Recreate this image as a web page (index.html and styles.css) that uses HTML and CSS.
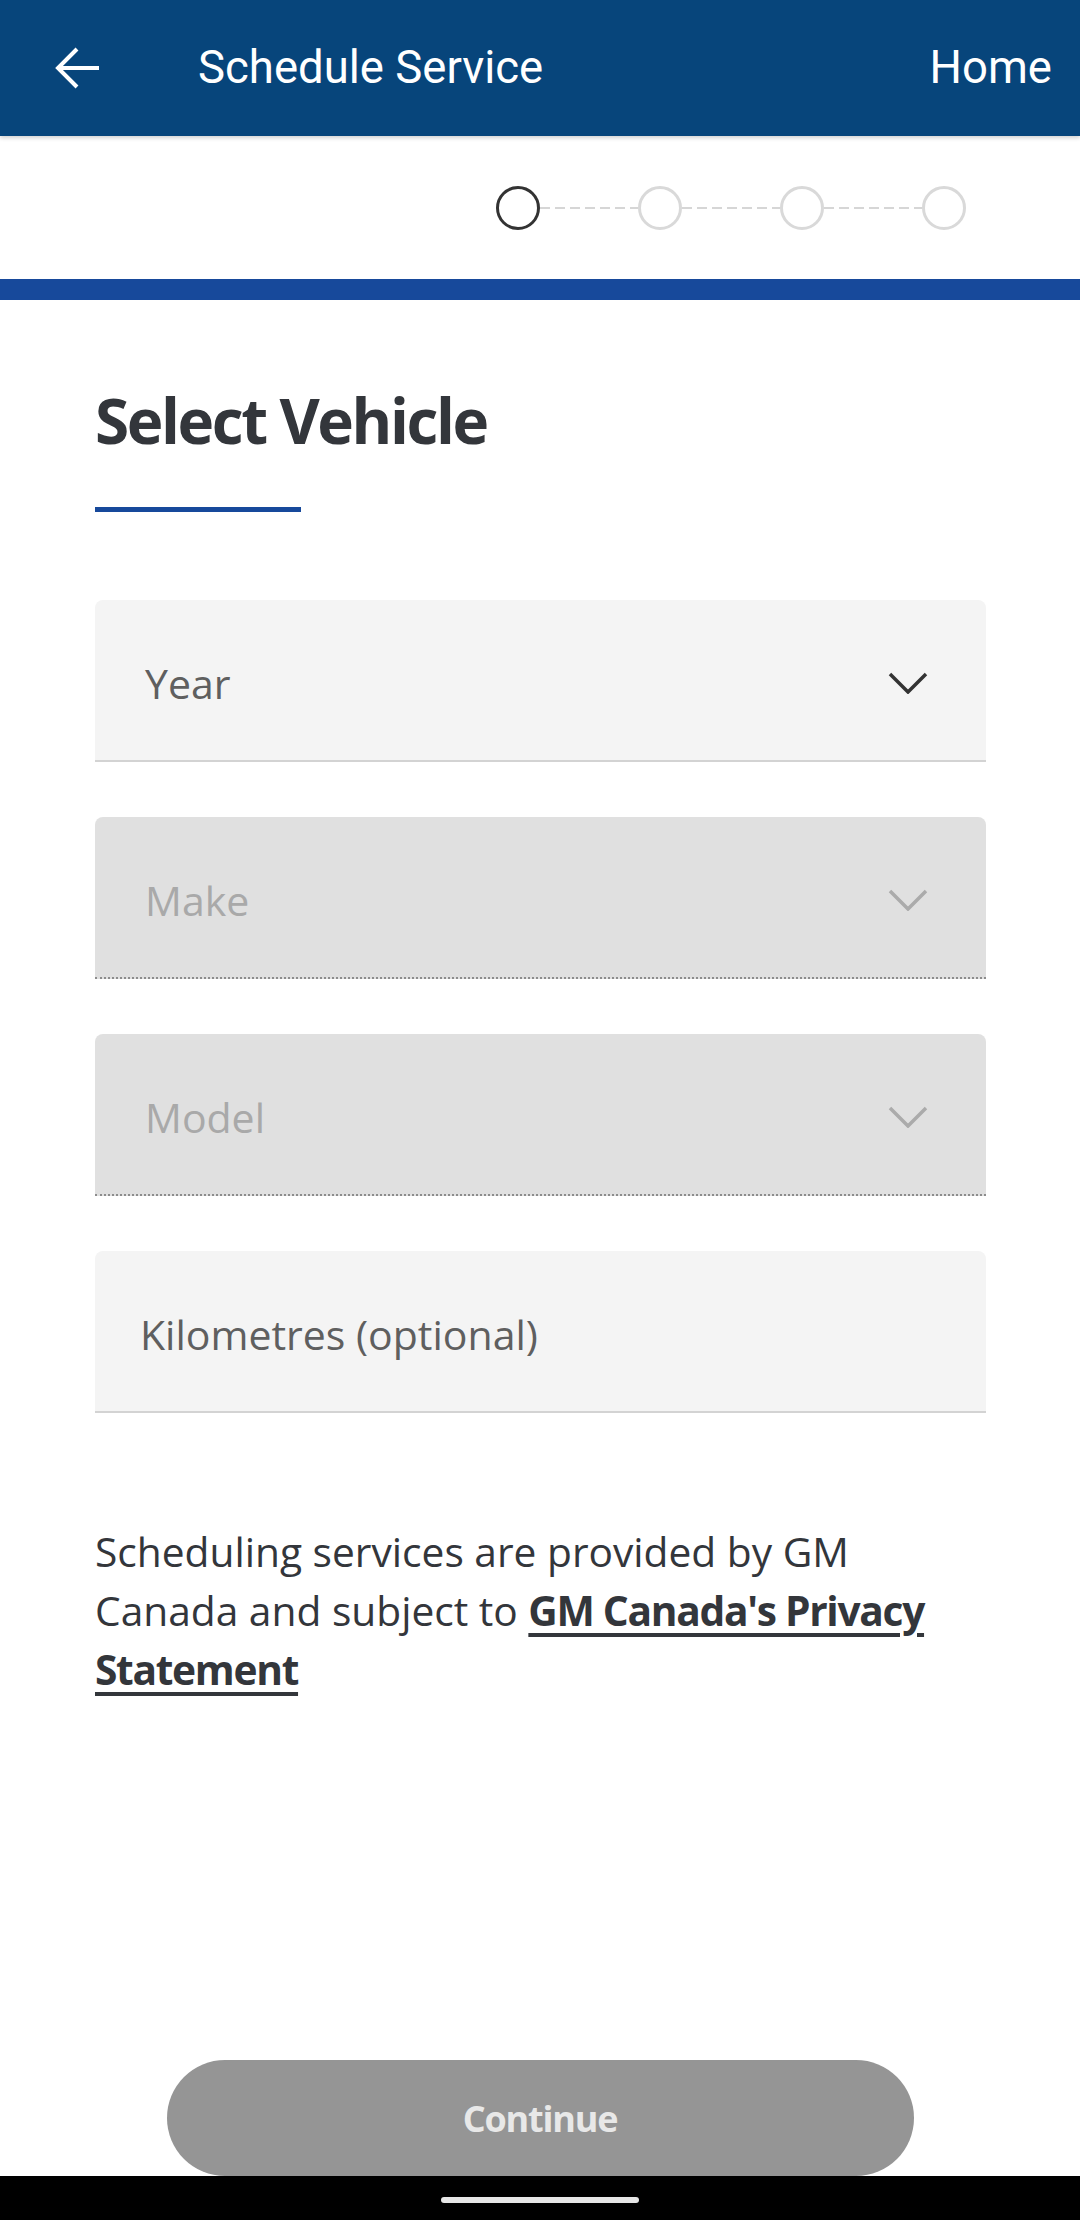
FILE: index.html
```html
<!DOCTYPE html>
<html lang="en">
<head>
<meta charset="utf-8">
<title>Schedule Service</title>
<link rel="stylesheet" href="styles.css">
</head>
<body>
<div class="screen">
  <header class="appbar">
    <svg class="appbar-back" width="44" height="42" viewBox="0 0 44 42" aria-hidden="true">
      <path d="M44 21H4M22 2L3 21L22 40" fill="none" stroke="#ffffff" stroke-width="4"/>
    </svg>
    <h1 class="appbar-title">Schedule Service</h1>
    <span class="appbar-action">Home</span>
  </header>

  <div class="stepper">
    <span class="step step-active"></span>
    <span class="step-line"></span>
    <span class="step"></span>
    <span class="step-line"></span>
    <span class="step"></span>
    <span class="step-line"></span>
    <span class="step"></span>
  </div>
  <div class="progress-band"></div>

  <main class="content">
    <h2 class="page-title">Select Vehicle</h2>
    <div class="title-rule"></div>

    <div class="fields">
      <div class="field">
        <span class="field-label">Year</span>
        <svg class="chevron" width="40" height="22" viewBox="0 0 40 22" aria-hidden="true">
          <path d="M2 2L20 20L38 2" fill="none" stroke="#333333" stroke-width="3.5"/>
        </svg>
      </div>
      <div class="field field-disabled">
        <span class="field-label">Make</span>
        <svg class="chevron" width="40" height="22" viewBox="0 0 40 22" aria-hidden="true">
          <path d="M2 2L20 20L38 2" fill="none" stroke="#ababab" stroke-width="3.5"/>
        </svg>
      </div>
      <div class="field field-disabled">
        <span class="field-label">Model</span>
        <svg class="chevron" width="40" height="22" viewBox="0 0 40 22" aria-hidden="true">
          <path d="M2 2L20 20L38 2" fill="none" stroke="#ababab" stroke-width="3.5"/>
        </svg>
      </div>
      <div class="field field-input">
        <span class="field-label">Kilometres (optional)</span>
      </div>
    </div>

    <p class="disclaimer">Scheduling services are provided by GM Canada and subject to <a class="disclaimer-link" href="#">GM Canada's Privacy Statement</a></p>
  </main>

  <footer class="actions">
    <button class="btn-continue" type="button">Continue</button>
  </footer>

  <div class="navbar"><span class="nav-pill"></span></div>
</div>
</body>
</html>
```

FILE: styles.css
```css
* {
  box-sizing: border-box;
}

html, body {
  margin: 0;
  padding: 0;
  background: #ffffff;
}

.screen {
  width: 1080px;
  height: 2220px;
  overflow: hidden;
  display: flex;
  flex-direction: column;
  font-family: "Open Sans", "Noto Sans", sans-serif;
  background: #ffffff;
}

/* App bar */
.appbar {
  position: relative;
  z-index: 1;
  height: 136px;
  flex: 0 0 136px;
  background: #07457b;
  display: flex;
  align-items: center;
  padding: 0 28px 0 55px;
  box-shadow: 0 2px 4px rgba(0, 0, 0, 0.18);
  color: #ffffff;
  font-family: Roboto, "Liberation Sans", sans-serif;
}

.appbar-back {
  display: block;
  flex: 0 0 auto;
}

.appbar-title {
  margin: 0 0 0 99px;
  font-size: 45.5px;
  font-weight: 400;
  line-height: 1;
}

.appbar-action {
  margin-left: auto;
  font-size: 45.5px;
  line-height: 1;
}

/* Stepper */
.stepper {
  height: 143px;
  flex: 0 0 143px;
  display: flex;
  align-items: center;
  padding-left: 496px;
}

.step {
  width: 44px;
  height: 44px;
  border-radius: 50%;
  border: 3px solid #d9d9d9;
  flex: 0 0 auto;
}

.step-active {
  border-color: #333333;
}

.step-line {
  width: 98px;
  height: 2px;
  background: repeating-linear-gradient(to right, #d6d6d6 0 10px, transparent 10px 15px);
}

.progress-band {
  height: 21px;
  flex: 0 0 21px;
  background: #17499b;
}

/* Content */
.content {
  flex: 1 1 auto;
  padding: 0 94px 0 95px;
  color: #33363b;
}

.page-title {
  margin: 83px 0 0;
  font-size: 62px;
  line-height: 74px;
  font-weight: 700;
  letter-spacing: -2.4px;
  color: #33363b;
}

.title-rule {
  width: 206px;
  height: 5px;
  margin-top: 50px;
  background: #17499b;
}

.fields {
  margin-top: 88px;
  display: flex;
  flex-direction: column;
  gap: 55px;
}

.field {
  height: 162px;
  display: flex;
  align-items: center;
  justify-content: space-between;
  padding: 6px 58px 0 50px;
  background: #f4f4f4;
  border-bottom: 2px solid #d3d3d3;
  border-radius: 8px 8px 0 0;
}

.field-label {
  font-size: 41px;
  line-height: 49px;
  color: #5f5f5f;
}

.chevron {
  display: block;
  flex: 0 0 auto;
}

.field-disabled {
  background: #e0e0e0;
  border-bottom: 2px dotted #8c8c8c;
}

.field-disabled .field-label {
  color: #a9a9a9;
}

.field-input {
  padding-left: 45px;
}

.disclaimer {
  margin: 109px 0 0;
  font-size: 40.7px;
  line-height: 59px;
  color: #33363b;
}

.disclaimer-link {
  color: #33363b;
  font-weight: 700;
  letter-spacing: -1.3px;
  text-decoration: underline;
  text-decoration-thickness: 4px;
  text-underline-offset: 7px;
}

/* Footer */
.actions {
  flex: 0 0 116px;
  display: flex;
  justify-content: center;
}

.btn-continue {
  width: 747px;
  height: 116px;
  border: none;
  border-radius: 58px;
  background: #959595;
  color: #e8e8e8;
  font-family: "Open Sans", "Noto Sans", sans-serif;
  font-size: 36px;
  font-weight: 700;
  letter-spacing: -1.2px;
  padding: 0;
}

.navbar {
  flex: 0 0 44px;
  background: #000000;
  display: flex;
  justify-content: center;
  align-items: center;
  padding-top: 4px;
}

.nav-pill {
  width: 198px;
  height: 6px;
  border-radius: 3px;
  background: #e6e6e6;
}
```
